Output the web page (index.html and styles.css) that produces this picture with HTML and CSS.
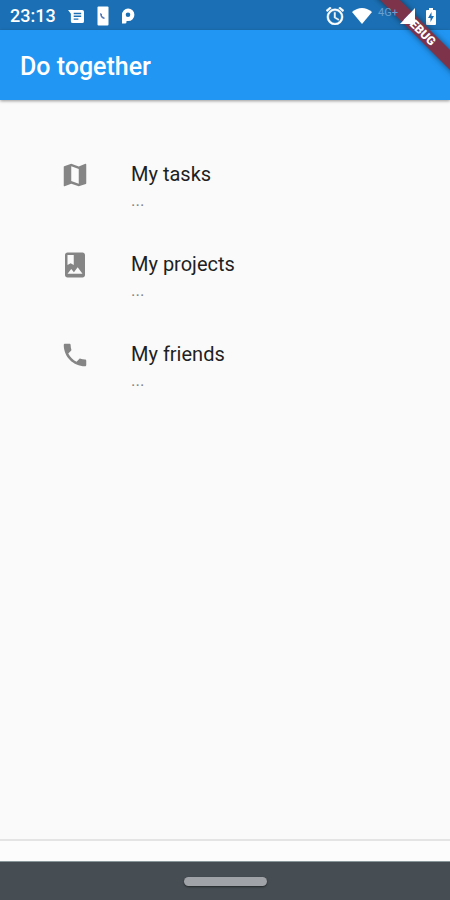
FILE: index.html
```html
<!DOCTYPE html>
<html lang="en">
<head>
<meta charset="utf-8">
<meta name="viewport" content="width=device-width, initial-scale=1">
<title>Do together</title>
<link rel="stylesheet" href="styles.css">
</head>
<body>
<div class="status">
  <div class="status-group status-left">
    <time class="clock">23:13</time>
    <svg width="17" height="15" viewBox="0 0 18 16" fill="#fff" aria-hidden="true"><path fill-rule="evenodd" d="M0 1h15q2 0 2 2v10q0 2-2 2H5q-2 0-2-2V5zM6 4v1.500h8V4zm0 3v1.500h8V7zm0 3v1.500h5V10z"/></svg>
    <svg width="12" height="20" viewBox="0 0 12 20" aria-hidden="true"><rect x=".5" y=".5" width="11" height="19" rx="1" fill="#fff"/><path d="M3 7l2 1v2l3 2-1 1Q3 12 3 7z" fill="#5579b8"/></svg>
    <svg width="14" height="16" viewBox="0 0 14 16" aria-hidden="true"><path fill="#fff" fill-rule="evenodd" d="M1 7a6.200 6.200 0 1 1 6.200 6H5.500v1q0 1.500-1.500 1.500H1zM7 4.500A2.300 2.300 0 0 0 7 9.100A2.300 2.300 0 0 0 7 4.500z"/></svg>
  </div>
  <div class="status-group status-right">
    <svg width="18" height="18" viewBox="2 2 20 20" fill="#fff" stroke="#fff" stroke-width=".5" aria-hidden="true"><path d="M22 5.720l-4.600-3.860-1.290 1.530 4.600 3.860L22 5.720zM7.880 3.390L6.600 1.860 2 5.710l1.290 1.530 4.590-3.850zM12.500 8H11v6l4.750 2.850.75-1.230-4-2.370V8zM12 4a9 9 0 1 0 0 18 9 9 0 0 0 0-18zm0 16a7 7 0 1 1 0-14 7 7 0 0 1 0 14z"/></svg>
    <svg width="20" height="16" viewBox="0 0 20 16" fill="#fff" aria-hidden="true"><path d="M0 4Q10-4 20 4L10 16z"/></svg>
    <span class="network">4G+</span>
    <svg class="signal" width="16" height="16" viewBox="0 0 16 16" fill="#fff" aria-hidden="true"><path d="M15 0v16H0z"/></svg>
    <svg class="battery" width="10" height="17" viewBox="0 0 10 17" aria-hidden="true"><path fill="#fff" d="M3 0h4v2h2q1 0 1 1v13q0 1-1 1H1q-1 0-1-1V3q0-1 1-1h2z"/><path fill="#1c70b5" d="M5.500 4v4H8l-3.500 6V10H2z"/></svg>
  </div>
</div>
<div class="ribbon"><span>DEBUG</span></div>
<header class="appbar"><h1>Do together</h1></header>
<main>
  <ul class="menu">
    <li><a href="#tasks">
      <svg viewBox="0 0 24 24" aria-hidden="true"><path d="M20.500 3l-.16.030L15 5.100 9 3 3.360 4.900c-.21.070-.36.250-.36.480V20.500c0 .280.220.500.500.500l.16-.030L9 18.900l6 2.100 5.640-1.900c.210-.070.360-.250.360-.480V3.500c0-.280-.220-.500-.500-.500zM15 19l-6-2.110V5l6 2.110V19z"/></svg>
      <span class="text"><span class="title">My tasks</span><span class="sub">...</span></span>
    </a></li>
    <li><a href="#projects">
      <svg viewBox="0 0 24 24" aria-hidden="true"><path d="M18 2H6c-1.100 0-2 .900-2 2v16c0 1.100.900 2 2 2h12c1.100 0 2-.900 2-2V4c0-1.100-.900-2-2-2zM6 4h5v8l-2.500-1.500L6 12V4zm0 15l3-3.860 2.140 2.580 3-3.860L18 19H6z"/></svg>
      <span class="text"><span class="title">My projects</span><span class="sub">...</span></span>
    </a></li>
    <li><a href="#friends">
      <svg viewBox="0 0 24 24" aria-hidden="true"><path d="M6.620 10.790c1.440 2.830 3.760 5.140 6.590 6.590l2.200-2.200c.270-.270.670-.360 1.020-.240 1.120.370 2.330.570 3.570.570.550 0 1 .450 1 1V20c0 .550-.450 1-1 1-9.390 0-17-7.610-17-17 0-.550.450-1 1-1h3.500c.550 0 1 .450 1 1 0 1.250.200 2.450.570 3.570.110.350.030.740-.250 1.020l-2.200 2.200z"/></svg>
      <span class="text"><span class="title">My friends</span><span class="sub">...</span></span>
    </a></li>
  </ul>
</main>
<div class="bottom"></div>
<div class="navbar"><button class="home" type="button" aria-label="Home"></button></div>
</body>
</html>
```
FILE: styles.css
```css
* { box-sizing: border-box; }

body {
  margin: 0;
  min-height: 100vh;
  display: flex;
  flex-direction: column;
  position: relative;
  overflow-x: hidden;
  background: #fafafa;
  font-family: Roboto, "Liberation Sans", sans-serif;
}

svg { display: block; flex: none; }

.status {
  display: flex;
  justify-content: space-between;
  height: 30px;
  padding: 2px 14px 0 10px;
  background: #1b70b5;
  color: #fff;
}

.status-group { display: flex; align-items: center; }
.status-left { gap: 12px; }
.status-right { gap: 8px; }

.clock { font-size: 18px; font-weight: 500; line-height: 24px; }

.network {
  align-self: flex-start;
  position: relative;
  z-index: 2;
  margin: 4px -6px 0 -2px;
  font-size: 11px;
  line-height: 14px;
  color: #6b9fce;
}

.signal { position: relative; z-index: 2; }
.battery { margin-left: 2px; }

.ribbon {
  position: absolute;
  top: 0;
  right: 0;
  width: 80px;
  height: 80px;
  overflow: hidden;
  z-index: 1;
  pointer-events: none;
}

.ribbon span {
  position: absolute;
  top: 23px;
  left: -10px;
  width: 120px;
  transform: rotate(45deg);
  background: #7d344b;
  box-shadow: 0 0 6px rgba(0, 0, 0, 0.5);
  color: #fff;
  font-size: 12px;
  font-weight: 900;
  line-height: 14px;
  text-align: center;
}

.appbar {
  display: flex;
  align-items: center;
  height: 70px;
  padding: 4px 20px 0;
  background: #2196f3;
  box-shadow: 0 1px 3px rgba(0, 0, 0, 0.4);
}

h1 {
  margin: 0;
  color: #fff;
  font-size: 25px;
  font-weight: 500;
  line-height: 32px;
}

main { flex: 1; padding: 40px; }

.menu { margin: 0; padding: 0; list-style: none; }

.menu a {
  display: flex;
  align-items: flex-start;
  gap: 41px;
  height: 90px;
  padding: 20px;
  color: #1f1f1f;
  text-decoration: none;
}

.menu svg { width: 30px; height: 30px; fill: #858585; }

.text { display: flex; flex-direction: column; }
.title { font-size: 20px; line-height: 28px; }
.sub { font-size: 17px; line-height: 24px; color: #858585; }

.bottom { height: 22px; border-top: 2px solid #e4e4e4; background: #fcfcfc; }

.navbar {
  display: flex;
  align-items: center;
  justify-content: center;
  height: 39px;
  border-top: 1px solid #89979b;
  background: #464e53;
}

.home {
  width: 83px;
  height: 9px;
  padding: 0;
  border: 0;
  border-radius: 5px;
  background: #a0a3a7;
  box-shadow: 0 1px 2px rgba(0, 0, 0, 0.5);
}
```
